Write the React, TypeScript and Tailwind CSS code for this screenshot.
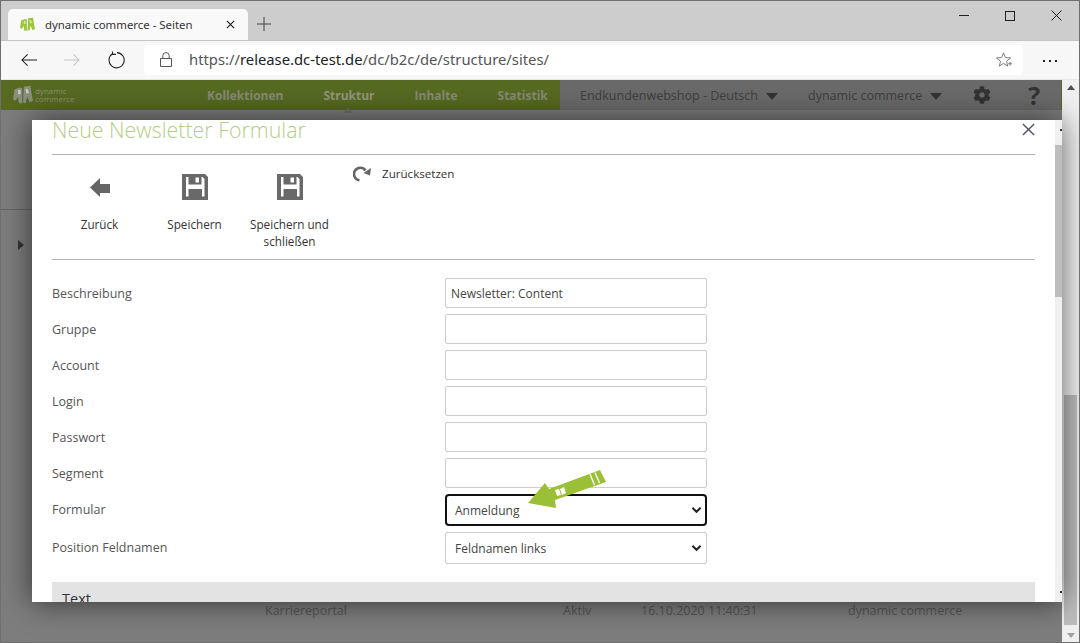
import React from "react";
import { FaCog } from "react-icons/fa";

function Logo({ className, color }: { className?: string; color: string }) {
  return (
    <svg viewBox="0 0 24 24" className={className}>
      <path fill={color} d="M2 5 L8 3 L11 4 L11 22 L7 22 L6 14 L3 19 L0 17 Z" />
      <path fill={color} d="M13 2 L21 1 L22 9 L24 19 L20 21 L17 14 L15 22 L12 21 Z" />
      <path fill="#ffffff" opacity="0.55" d="M6 6 L9 6 L9 11 L6 11 Z M15 5 L18 5 L19 10 L16 10 Z" />
    </svg>
  );
}

function FloppyIcon() {
  return (
    <svg viewBox="0 0 28 28" className="w-[28px] h-[28px]">
      <path fill="#696969" fillRule="evenodd" d="M1 1 H24 L27 4 V27 H1 Z M5 4 V23.5 H23.5 V6 L21.5 4 H20.5 V11.5 H7.5 V4 Z M14.5 4.5 V9.5 H18 V4.5 Z M7.5 16 V23.5 H21 V16 Z" />
    </svg>
  );
}

function ToolButton({ label, children }: { label: React.ReactNode; children: React.ReactNode }) {
  return (
    <div className="w-[95px] flex flex-col items-center">
      <div className="h-[28px] flex items-center justify-center">{children}</div>
      <div className="mt-[15px] text-[11.7px] leading-[17px] text-center text-[#333]">{label}</div>
    </div>
  );
}

function Row({ label, value }: { label: string; value?: string }) {
  return (
    <div className="flex items-center mb-[6px]">
      <div className="w-[393px] pt-[2px] text-[12.5px] text-[#555]">{label}</div>
      <div className="w-[262px] h-[30px] border border-[#ccc] rounded-[2px] px-[5px] flex items-center text-[12px] text-[#444] bg-white">
        <span className="pt-[1px]">{value}</span>
      </div>
    </div>
  );
}

function Chevron() {
  return (
    <svg viewBox="0 0 12 8" className="w-[11px] h-[8px]">
      <path d="M1.5 1.5 L6 6 L10.5 1.5" fill="none" stroke="#222" strokeWidth="2.2" />
    </svg>
  );
}

export default function App() {
  return (
    <div className="w-[1080px] h-[643px] overflow-hidden flex flex-col border border-[#6f6f6f] bg-white font-['Open_Sans',sans-serif]">
      {/* Title bar */}
      <div className="h-[40px] shrink-0 bg-[#cdcdcd] flex items-end pl-[7px] border-b border-[#c4c4c4]">
        <div className="w-[240px] h-[31px] bg-[#f9f9f9] rounded-t-[5px] flex items-center pl-[12px] pr-[13px] font-['Noto_Sans',sans-serif]">
          <Logo className="w-[15px] h-[15px]" color="#9bc53d" />
          <span className="ml-[10px] text-[11.4px] text-[#333] flex-1">dynamic commerce - Seiten</span>
          <svg viewBox="0 0 10 10" className="w-[9px] h-[9px]"><path d="M1 1 L9 9 M9 1 L1 9" stroke="#222" strokeWidth="1.3" /></svg>
        </div>
        <svg viewBox="0 0 14 14" className="w-[14px] h-[14px] ml-[9px] mb-[9px]"><path d="M7 0 V14 M0 7 H14" stroke="#444" strokeWidth="1" /></svg>
        <div className="flex-1" />
        <div className="self-start flex items-center pt-[9px] pr-[17px]">
          <div className="w-[10px] h-[1px] bg-[#222] mr-[36px]" />
          <div className="w-[10px] h-[10px] border border-[#222] mr-[36px]" />
          <svg viewBox="0 0 11 11" className="w-[11px] h-[11px]"><path d="M0.5 0.5 L10.5 10.5 M10.5 0.5 L0.5 10.5" stroke="#222" strokeWidth="1" /></svg>
        </div>
      </div>
      {/* Toolbar */}
      <div className="h-[39px] shrink-0 bg-[#f7f7f7] flex items-center pl-[20px] pr-[18px] border-b border-[#e8e8e8] font-['Noto_Sans',sans-serif]">
        <svg viewBox="0 0 18 14" className="w-[17px] h-[14px]"><path d="M17 7 H1 M7 1 L1 7 L7 13" fill="none" stroke="#222" strokeWidth="1.1" /></svg>
        <svg viewBox="0 0 18 14" className="w-[17px] h-[14px] ml-[26px]"><path d="M0 7 H16 M10 1 L16 7 L10 13" fill="none" stroke="#c4c4c4" strokeWidth="1.1" /></svg>
        <svg viewBox="0 0 18 18" className="w-[18px] h-[18px] ml-[26px]"><path d="M5.5 2.8 A7.6 7.6 0 1 0 10 1.6 M5.5 0.5 V3.4 H9" fill="none" stroke="#222" strokeWidth="1.1" /></svg>
        <div className="ml-[19px] w-[879px] h-[30px] bg-white rounded-[4px] flex items-center pl-[16px] pr-[10px] mt-[-1px]">
          <svg viewBox="0 0 12 15" className="w-[12px] h-[15px]"><path d="M0.5 6.5 H11.5 V14.5 H0.5 Z M2.8 6.5 V3.8 A3.2 3.2 0 0 1 9.2 3.8 V6.5" fill="none" stroke="#555" strokeWidth="1" /></svg>
          <span className="ml-[17px] text-[14.8px] text-[#555] flex-1">https://<span className="text-[#222]">release.dc-test.de</span>/dc/b2c/de/structure/sites/</span>
          <svg viewBox="0 0 18 17" className="w-[17px] h-[16px]"><path d="M8 1 L10 6 L15.5 6.3 L11.2 9.8 L12.5 15 L8 12 L3.5 15 L4.8 9.8 L0.5 6.3 L6 6 Z M13 12.5 H17 M15 10.5 V14.5" fill="none" stroke="#666" strokeWidth="0.9" /></svg>
        </div>
        <div className="ml-[20px] flex gap-[4px] mt-[2px]">
          <span className="w-[2px] h-[2px] bg-[#222]" /><span className="w-[2px] h-[2px] bg-[#222]" /><span className="w-[2px] h-[2px] bg-[#222]" />
        </div>
      </div>
      {/* Page */}
      <div className="flex-1 flex min-h-0">
        <div className="flex-1 relative bg-[#7d7d7d] flex flex-col min-w-0">
          <div className="h-[30px] shrink-0 flex items-center bg-[#566a22] relative">
            <div className="w-[200px] pl-[12px] flex items-center">
              <Logo className="w-[20px] h-[20px]" color="#8b8f7d" />
              <div className="ml-[2px] text-[8px] leading-[8px] text-[#888f72]">dynamic<br />commerce</div>
            </div>
            <div className="flex gap-[40px] ml-[6px] pt-[2px] text-[12px] font-bold text-[#858a76]">
              <span>Kollektionen</span>
              <span className="relative text-[#92967f]">
                Struktur
                <span className="absolute left-[20px] top-[21px] w-0 h-0 border-x-[5px] border-x-transparent border-b-[5px] border-b-[#6f6f6f]" />
              </span>
              <span>Inhalte</span><span>Statistik</span>
            </div>
            <div className="absolute left-[559px] top-0 bottom-0 w-[501px] bg-[#6a6a6a] flex items-center pl-[20px] pt-[2px] text-[12.5px] text-[#3f3f3f]">
              <span>Endkundenwebshop - Deutsch</span>
              <span className="ml-[8px] w-0 h-0 border-x-[6px] border-x-transparent border-t-[7px] border-t-[#333]" />
              <span className="ml-[30px]">dynamic commerce</span>
              <span className="ml-[8px] w-0 h-0 border-x-[6px] border-x-transparent border-t-[7px] border-t-[#333]" />
              <FaCog className="ml-[31px] -mt-[2px] w-[18px] h-[18px] text-[#333]" />
              <span className="ml-[37px] -mt-[2px] text-[25px] font-bold text-[#333] leading-none">?</span>
            </div>
          </div>
          <div className="flex-1 flex flex-col">
            <div className="h-[100px] w-[32px] border-b border-[#666] shrink-0" />
            <div className="mt-[30px] pl-[17px]">
              <span className="block w-0 h-0 border-y-[5px] border-y-transparent border-l-[6px] border-l-[#333]" />
            </div>
            <div className="flex-1" />
            <div className="h-[40px] shrink-0 flex pl-[264px] text-[12.5px] text-[#555]">
              <span className="w-[298px]">Karriereportal</span>
              <span className="w-[78px]">Aktiv</span>
              <span className="w-[207px]">16.10.2020 11:40:31</span>
              <span>dynamic commerce</span>
            </div>
          </div>

          {/* Modal */}
          <div className="absolute left-[31px] top-[40px] w-[1030px] h-[482px] bg-white overflow-hidden flex shadow-[0_0_28px_rgba(0,0,0,0.6)]">
            <div className="flex-1 flex flex-col px-[20px] relative min-w-0">
              <div className="h-[35px] shrink-0 border-b border-[#b4b4b4] text-[21.4px] leading-[20px] font-light text-[#b5cd84]">Neue Newsletter Formular</div>
              <svg viewBox="0 0 14 14" className="absolute right-[20px] top-[3px] w-[13px] h-[13px]"><path d="M1 1 L13 13 M13 1 L1 13" stroke="#4d5560" strokeWidth="1.5" /></svg>
              <div className="h-[105px] shrink-0 border-b border-[#b4b4b4] flex pt-[18px]">
                <ToolButton label="Zurück">
                  <svg viewBox="0 0 20 19" className="w-[20px] h-[19px]"><path fill="#666" d="M0 9.5 L10 0 V6 H20 V15 H10 V19 Z" /></svg>
                </ToolButton>
                <ToolButton label="Speichern"><FloppyIcon /></ToolButton>
                <ToolButton label={<>Speichern und<br />schließen</>}><FloppyIcon /></ToolButton>
                <div className="flex items-center self-start ml-[16px] -mt-[8px]">
                  <svg viewBox="0 0 18 16" className="w-[18px] h-[16px]"><path fill="none" stroke="#666" strokeWidth="2.6" d="M12.5 4.5 A6.3 6.3 0 1 0 6.5 14.3" /><path fill="#666" d="M18 2 L17 9.5 L10.5 7 Z" /></svg>
                  <span className="ml-[11px] text-[11.6px] text-[#333]">Zurücksetzen</span>
                </div>
              </div>
              <div className="pt-[18px]">
                <Row label="Beschreibung" value="Newsletter: Content" />
                <Row label="Gruppe" />
                <Row label="Account" />
                <Row label="Login" />
                <Row label="Passwort" />
                <Row label="Segment" />
                <div className="flex items-center mb-[6px]">
                  <div className="w-[393px] text-[12.5px] text-[#555]">Formular</div>
                  <div className="w-[262px] h-[32px] border-2 border-[#111] rounded-[4px] pl-[8px] pr-[3px] flex items-center justify-between text-[12px] text-[#444]">
                    <span className="pt-[2px]">Anmeldung</span><Chevron />
                  </div>
                </div>
                <div className="flex items-center mb-[18px]">
                  <div className="w-[393px] text-[12.5px] text-[#555]">Position Feldnamen</div>
                  <div className="w-[262px] h-[32px] border border-[#ccc] rounded-[2px] pl-[9px] pr-[4px] flex items-center justify-between text-[12px] text-[#444]">
                    <span className="pt-[2px]">Feldnamen links</span><Chevron />
                  </div>
                </div>
                <div className="h-[40px] bg-[#e3e3e3] pl-[10px] pt-[6px] text-[14.5px] text-[#333]">Text</div>
              </div>
              {/* Green arrow annotation */}
              <svg viewBox="0 0 90 50" className="absolute left-[488px] top-[345px] w-[90px] h-[50px]">
                <path fill="#9bbf35" d="M8 38 L25 18 L29 24 L80 5 L86 17 L35 35 L36 43 Z" />
                <path fill="#ffffff" d="M35 25 L39 24 L41 30 L37 31 Z M40 24 L44 22 L46 28 L42 30 Z" />
                <path stroke="#ffffff" strokeWidth="1.4" d="M70 9 L74.5 20 M75 7.5 L79.5 18" />
              </svg>
            </div>
            <div className="w-[7px] shrink-0 bg-[#f0f0f0] pt-[9px] flex flex-col items-end">
              <span className="w-[2px] h-[2px] bg-[#333]" />
              <div className="mt-[14px] h-[152px] w-full bg-[#bdbdbd]" />
              <div className="flex-1" />
              <span className="w-[2px] h-[2px] bg-[#333] mb-[9px]" />
            </div>
          </div>
        </div>
        {/* Outer scrollbar */}
        <div className="w-[17px] shrink-0 bg-[#f0f0f0] flex flex-col items-center pt-[5px] pb-[4px]">
          <span className="w-0 h-0 border-x-[4px] border-x-transparent border-b-[5px] border-b-[#505050]" />
          <div className="mt-[305px] w-[13px] h-[230px] bg-[#bdbdbd]" />
          <div className="flex-1" />
          <span className="w-0 h-0 border-x-[4px] border-x-transparent border-t-[5px] border-t-[#a0a0a0]" />
        </div>
      </div>
    </div>
  );
}
